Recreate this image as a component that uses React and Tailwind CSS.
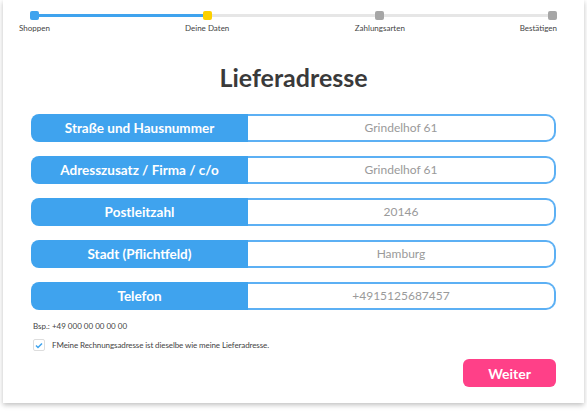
import React from "react";

const rows = [
  ["Straße und Hausnummer", "Grindelhof 61"],
  ["Adresszusatz / Firma / c/o", "Grindelhof 61"],
  ["Postleitzahl", "20146"],
  ["Stadt (Pflichtfeld)", "Hamburg"],
  ["Telefon", "+4915125687457"],
];

const steps = [
  ["Shoppen", "bg-[#3fa3ee]", "items-center"],
  ["Deine Daten", "bg-[#fcd000]", "items-center"],
  ["Zahlungsarten", "bg-[#a6a6a6]", "items-center"],
  ["Bestätigen", "bg-[#a6a6a6]", "items-end"],
];

export default function App() {
  return (
    <div className="w-[587px] h-[412px] bg-white overflow-hidden" style={{ fontFamily: "Lato, 'Open Sans', sans-serif" }}>
      <div className="ml-[3px] w-[581px] h-[403px] bg-white shadow-[0_2px_5px_rgba(0,0,0,0.25)] flex flex-col">
        {/* progress */}
        <div className="relative mx-[27px] mt-[11px] h-[29px]">
          <div className="absolute left-[4px] right-[4px] top-[3px] h-[3px] bg-[#e6e6e6]" />
          <div className="absolute left-[4px] w-[170px] top-[3px] h-[3px] bg-[#3fa3ee]" />
          <div className="relative flex justify-between">
            {steps.map(([label, color, align]) => (
              <div key={label} className={`w-[9px] flex flex-col ${align}`}>
                <div className={`w-[9px] h-[9px] rounded-[2px] ${color}`} />
                <span className="mt-[3px] whitespace-nowrap text-[8px] text-[#444] leading-[10px]">{label}</span>
              </div>
            ))}
          </div>
        </div>
        <h1 className="text-center text-[25px] font-bold text-[#3a3a3a] mt-[21px] leading-[32px]">Lieferadresse</h1>
        <div className="flex flex-col gap-[14px] px-[28px] mt-[21px]">
          {rows.map(([l, v]) => (
            <div key={l} className="flex h-[28px]">
              <div className="w-[217px] bg-[#3fa3ee] rounded-l-[8px] flex items-center justify-center text-white font-bold text-[13.5px]">{l}</div>
              <div className="flex-1 border-2 border-l-0 border-[#5cb0f4] rounded-r-[10px] flex items-center justify-center text-[12px] text-[#9a9a9a]">{v}</div>
            </div>
          ))}
        </div>
        <div className="px-[30px] mt-[10px] text-[8px] text-[#444]">Bsp.: +49 000 00 00 00 00</div>
        <div className="px-[30px] mt-[7px] flex items-center gap-[7px]">
          <div className="w-[12px] h-[12px] border border-[#ddd] rounded-[2px] flex items-center justify-center">
            <svg width="8" height="7" viewBox="0 0 8 7"><path d="M1 3.5 L3 5.5 L7 1.5" stroke="#3fa3ee" strokeWidth="1.5" fill="none" /></svg>
          </div>
          <span className="text-[8px] text-[#444] tracking-[-0.1px]">FMeine Rechnungsadresse ist dieselbe wie meine Lieferadresse.</span>
        </div>
        <div className="flex justify-end px-[28px] mt-[8px]">
          <button className="w-[93px] h-[28px] rounded-[6px] bg-[#ff4088] text-white font-bold text-[14px]">Weiter</button>
        </div>
      </div>
    </div>
  );
}
